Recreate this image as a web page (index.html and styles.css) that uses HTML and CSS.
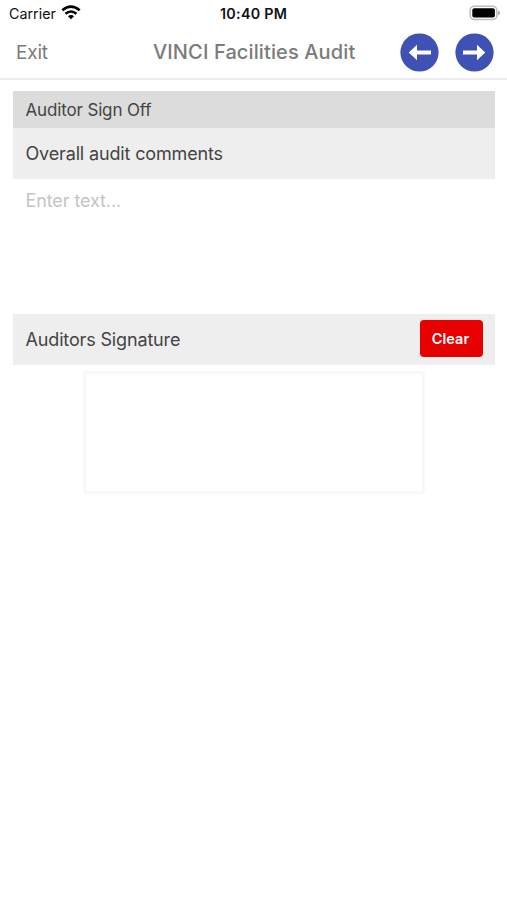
FILE: index.html
```html
<!DOCTYPE html>
<html lang="en">
<head>
<meta charset="utf-8">
<title>VINCI Facilities Audit</title>
<link rel="stylesheet" href="styles.css">
</head>
<body>
<div class="status">
  <div class="carrier"><span class="carrier-name">Carrier</span>
    <svg class="wifi" width="20" height="15" viewBox="0 0 20 15"><g fill="none" stroke="#000" stroke-width="2.6"><path d="M1.3 5.3Q10-1.9 18.7 5.3"/><path d="M4.5 8.8Q10 4.2 15.5 8.8"/></g><path d="M7 11.2Q10 8.9 13 11.2L10 14.3Z"/></svg>
  </div>
  <span class="time">10:40 PM</span>
  <svg class="battery" width="32" height="16" viewBox="0 0 32 16"><rect x="1.2" y="1.2" width="26.6" height="13.4" rx="4" fill="#fff" stroke="#bdbdbd" stroke-width="1.5"/><rect x="3.3" y="3.3" width="22.6" height="9.3" rx="2"/><path d="M29 5.5Q31 6.4 31 8T29 10.4Z" fill="#aaa"/></svg>
</div>
<header class="nav">
  <span class="exit">Exit</span>
  <h1 class="title">VINCI Facilities Audit</h1>
  <div class="arrows">
    <svg width="39" height="39" viewBox="0 0 39 39"><circle cx="19.5" cy="19.5" r="19.1" fill="#3f51b5"/><path d="M8.7 19.5L17 11.8V17.4H31V21.6H17V27.2Z" fill="#fff"/></svg>
    <svg width="39" height="39" viewBox="0 0 39 39"><circle cx="19.5" cy="19.5" r="19.1" fill="#3f51b5"/><path d="M30.3 19.5L22 11.8V17.4H8V21.6H22V27.2Z" fill="#fff"/></svg>
  </div>
</header>
<main class="form">
  <div class="section"><span class="section-text">Auditor Sign Off</span></div>
  <div class="row"><span class="row-text">Overall audit comments</span></div>
  <div class="entry"><span class="entry-text">Enter text...</span></div>
  <div class="row"><span class="row-text">Auditors Signature</span><button class="clear">Clear</button></div>
  <div class="pad"></div>
</main>
</body>
</html>
```
FILE: styles.css
```css
* { box-sizing: border-box; }
body { margin: 0; height: 900px; background: #fff; font-family: Inter, "Liberation Sans", sans-serif; color: #444; }
svg { display: block; flex: none; }
span, h1 { white-space: nowrap; }
.status { height: 27px; padding: 0 6px 0 9px; display: grid; grid-template-columns: 211px auto 1fr; align-items: center; color: #111; font-size: 14.3px; }
.carrier { display: flex; align-items: center; gap: 5px; }
.wifi { margin-top: -2px; }
.time { font-weight: 600; letter-spacing: 0.28px; }
.battery { justify-self: end; margin-top: -1px; }
.nav { height: 53px; padding: 0 13px 1px 16px; border-bottom: 2px solid #ececec; display: grid; grid-template-columns: 137px 1fr auto; align-items: center; color: #7b7b7b; }
.exit { font-size: 19px; letter-spacing: -0.2px; }
.title { margin: 0; font-size: 20px; font-weight: 500; letter-spacing: 0.12px; }
.arrows { display: flex; gap: 16px; }
.form { padding: 11px 12px 0 13px; }
.section, .row { display: flex; align-items: center; padding: 0 12px 0 12.5px; }
.section { height: 37px; background: #dcdcdc; font-size: 17px; letter-spacing: -0.15px; }
.row { height: 51px; background: #eee; font-size: 18px; letter-spacing: -0.15px; justify-content: space-between; }
.entry { height: 135px; padding: 11px 12.5px; font-size: 18px; line-height: 22px; letter-spacing: -0.1px; color: #c4c4c4; }
.clear { width: 63px; height: 37px; margin-top: -2px; padding: 0 2px 1px 0; border: 0; border-radius: 4px; background: #e60000; color: #fff; font: 600 14.5px Inter, sans-serif; }
.pad { width: 342px; height: 123px; margin: 6px 0 0 70px; border: 3px solid #f8f8f8; border-radius: 4px; }
```
